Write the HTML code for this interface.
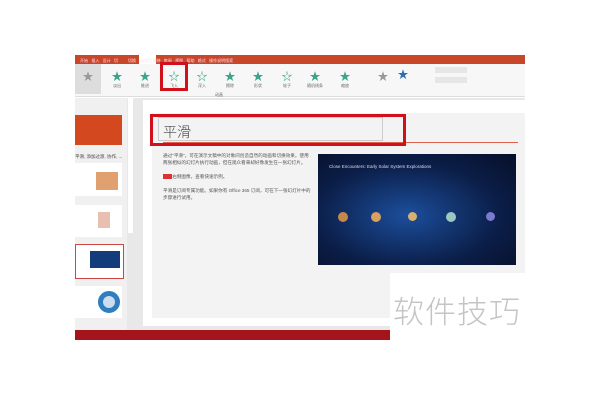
<!DOCTYPE html><html><head><meta charset="utf-8"><style>
*{margin:0;padding:0;box-sizing:border-box}
body{width:600px;height:400px;background:#fff;position:relative;overflow:hidden;font-family:"Liberation Sans","Noto Sans CJK SC",sans-serif}
.a{position:absolute}
.star{position:absolute;font-size:11px;color:#3aa58a;text-align:center;width:24px}
.lbl{position:absolute;font-size:4px;color:#666;width:24px;text-align:center}
</style></head><body>
<div class="a" style="left:75px;top:55px;width:450px;height:9px;background:#c8462a"></div>
<div class="a" style="left:139px;top:55px;width:17px;height:9px;background:#fff"></div>
<div class="a" style="left:80px;top:58px;font-size:4px;color:#fde">开始 &nbsp; 插入 &nbsp; 设计 &nbsp; 切 &nbsp;&nbsp;&nbsp;&nbsp;&nbsp;&nbsp;&nbsp; 切换 &nbsp;&nbsp; 幻灯片放映 &nbsp; 审阅 &nbsp; 视图 &nbsp; 帮助 &nbsp; 格式 &nbsp; 操作说明搜索</div>
<div class="a" style="left:75px;top:64px;width:450px;height:33px;background:#f7f7f7;border-bottom:1px solid #ddd"></div>
<div class="a" style="left:75px;top:64px;width:26px;height:30px;background:#ddd"></div>
<div class="star" style="left:76px;top:68px;color:#999">★</div>
<div class="star" style="left:105px;top:68px">★</div><div class="lbl" style="left:105px;top:83px">淡出</div>
<div class="star" style="left:133px;top:68px">★</div><div class="lbl" style="left:133px;top:83px">推进</div>
<div class="star" style="left:162px;top:68px">☆</div><div class="lbl" style="left:162px;top:83px">飞入</div>
<div class="a" style="left:160px;top:62px;width:28px;height:29px;border:3px solid #d0101a"></div>
<div class="star" style="left:190px;top:68px">☆</div><div class="lbl" style="left:190px;top:83px">浮入</div>
<div class="star" style="left:218px;top:68px">★</div><div class="lbl" style="left:218px;top:83px">擦除</div>
<div class="star" style="left:246px;top:68px">★</div><div class="lbl" style="left:246px;top:83px">形状</div>
<div class="star" style="left:275px;top:68px">☆</div><div class="lbl" style="left:275px;top:83px">轮子</div>
<div class="star" style="left:303px;top:68px">★</div><div class="lbl" style="left:303px;top:83px">随机线条</div>
<div class="star" style="left:333px;top:68px">★</div><div class="lbl" style="left:333px;top:83px">缩放</div>
<div class="star" style="left:371px;top:68px;color:#999">★</div>
<div class="star" style="left:391px;top:66px;color:#2d6fb5">★</div>
<div class="a" style="left:215px;top:92px;font-size:4px;color:#666">动画</div>
<div class="a" style="left:435px;top:67px;width:32px;height:6px;background:#e6e6e6"></div>
<div class="a" style="left:435px;top:77px;width:32px;height:6px;background:#e6e6e6"></div>
<div class="a" style="left:75px;top:98px;width:450px;height:242px;background:#e8e8e8"></div>
<div class="a" style="left:75px;top:98px;width:52px;height:232px;background:#f0f0f0"></div>
<div class="a" style="left:128px;top:98px;width:5px;height:135px;background:#fff"></div>
<div class="a" style="left:75px;top:115px;width:47px;height:30px;background:#d4481f"></div>
<div class="a" style="left:75px;top:154px;font-size:4.5px;color:#444;white-space:nowrap">平滑, 添加过渡, 协作, ...</div>
<div class="a" style="left:75px;top:163px;width:47px;height:33px;background:#fff"></div>
<div class="a" style="left:96px;top:172px;width:22px;height:18px;background:#e0a070"></div>
<div class="a" style="left:75px;top:205px;width:47px;height:32px;background:#fff"></div>
<div class="a" style="left:98px;top:212px;width:12px;height:16px;background:#e8c0b0"></div>
<div class="a" style="left:75px;top:244px;width:49px;height:35px;background:#fff;border:1px solid #c44"></div>
<div class="a" style="left:90px;top:251px;width:30px;height:17px;background:#123c7a"></div>
<div class="a" style="left:75px;top:286px;width:47px;height:32px;background:#fff"></div>
<div class="a" style="left:98px;top:291px;width:22px;height:22px;border-radius:50%;border:5px solid #2f7ec0;background:#cde"></div>
<div class="a" style="left:143px;top:100px;width:382px;height:226px;background:#fff"></div>
<div class="a" style="left:152px;top:113px;width:373px;height:205px;background:#f3f3f3"></div>
<div class="a" style="left:163px;top:142px;width:355px;height:1px;background:#e06050"></div>
<div class="a" style="left:158px;top:117px;width:225px;height:24px;border:1px solid #ccc"></div>
<div class="a" style="left:150px;top:114px;width:256px;height:32px;border:3px solid #d0101a"></div>
<div class="a" style="left:163px;top:122px;font-size:14px;color:#444;font-family:'Noto Sans CJK SC',sans-serif;font-weight:300">平滑</div>
<div class="a" style="left:163px;top:152px;width:150px;font-size:4.6px;line-height:7px;color:#555">通过"平滑"，可在演示文稿中的对象间创造自然的动画和切换效果。使用两张相似的幻灯片执行动画，但在观众看来却好像发生在一张幻灯片。<br><br><span style="background:#d33;color:#d33">播放</span>右侧图像，查看快速示例。<br><br>平滑是订阅专属功能。如果你有 Office 365 订阅，可在下一张幻灯片中的步骤进行试用。</div>
<div class="a" style="left:318px;top:154px;width:198px;height:111px;background:radial-gradient(ellipse at 45% 55%,#1c4e9c,#0b1e48 60%,#060f28)"></div>
<div class="a" style="left:329px;top:164px;font-size:4.5px;color:#dde">Close Encounters: Early Solar System Explorations</div>
<div class="a" style="left:338px;top:212px;width:10px;height:10px;border-radius:50%;background:#c8874a"></div>
<div class="a" style="left:371px;top:212px;width:10px;height:10px;border-radius:50%;background:#d9a060"></div>
<div class="a" style="left:408px;top:212px;width:9px;height:9px;border-radius:50%;background:#d8b070"></div>
<div class="a" style="left:446px;top:212px;width:10px;height:10px;border-radius:50%;background:#9cc8c0"></div>
<div class="a" style="left:486px;top:212px;width:9px;height:9px;border-radius:50%;background:#7a7ad0"></div>
<div class="a" style="left:75px;top:330px;width:315px;height:10px;background:#a4141c"></div>
<div class="a" style="left:390px;top:273px;width:135px;height:67px;background:#fff"></div>
<div class="a" style="left:393px;top:287px;font-size:31px;color:#c4c4c4;letter-spacing:1px;font-family:'Noto Sans CJK SC',sans-serif;font-weight:300">软件技巧</div>
</body></html>
